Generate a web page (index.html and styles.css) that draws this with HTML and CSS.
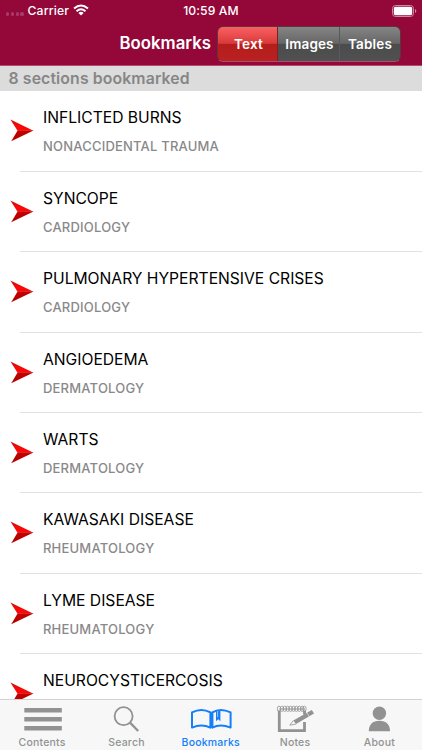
FILE: index.html
```
<!DOCTYPE html>
<html lang="en">
<head>
<meta charset="utf-8">
<title>Bookmarks</title>
<link rel="stylesheet" href="styles.css">
</head>
<body>
<svg class="defs" width="0" height="0" aria-hidden="true">
  <defs>
    <linearGradient id="upper" x1="0" y1="0" x2="0" y2="1"><stop offset="0" stop-color="#c80c0c"/><stop offset=".6" stop-color="#fa0808"/></linearGradient>
    <linearGradient id="lower" x1="0" y1="0" x2="0" y2="1"><stop offset="0" stop-color="#c40000"/><stop offset="1" stop-color="#b00000"/></linearGradient>
    <symbol id="arrow" viewBox="0 0 24 23">
      <path d="M.4.5 23.5 11.7H7.6Z" fill="url(#upper)"/>
      <path d="M7.6 11.5H23.5L1.2 22.3Z" fill="url(#lower)"/>
    </symbol>
  </defs>
</svg>
<div class="screen">
  <header class="header">
    <div class="status">
      <div class="carrier">
        <span class="dots"><i></i><i></i><i></i><i></i></span>
        <span class="carrier-name">Carrier</span>
        <svg class="wifi" width="16" height="12" viewBox="0 0 16 12" fill="none" stroke="#fff" stroke-width="2">
          <path d="M1 4.6Q8-1.6 15 4.6M3.5 7.3Q8 3.3 12.5 7.3"/><path d="M8 11.5 5.4 8.9Q8 6.7 10.6 8.9Z" fill="#fff" stroke="none"/>
        </svg>
      </div>
      <span class="time">10:59 AM</span>
      <svg class="battery" width="25" height="12" viewBox="0 0 25 12">
        <rect x=".5" y=".5" width="21" height="11" rx="3" fill="none" stroke="#cf86a2"/>
        <rect x="1.8" y="1.8" width="18.4" height="8.4" rx="1.6" fill="#fff"/>
        <path d="M23 4v4q1.3-.6 1.3-2T23 4Z" fill="#cf86a2"/>
      </svg>
    </div>
    <div class="nav">
      <h1 class="nav-title">Bookmarks</h1>
      <div class="segments">
        <span class="segment active">Text</span>
        <span class="segment">Images</span>
        <span class="segment last">Tables</span>
      </div>
    </div>
  </header>
  <div class="section-head">8 sections bookmarked</div>
  <main class="list">
    <div class="row"><svg class="arrow"><use href="#arrow"/></svg><div class="copy"><div class="title">INFLICTED BURNS</div><div class="sub">NONACCIDENTAL TRAUMA</div></div></div>
    <div class="row"><svg class="arrow"><use href="#arrow"/></svg><div class="copy"><div class="title">SYNCOPE</div><div class="sub">CARDIOLOGY</div></div></div>
    <div class="row"><svg class="arrow"><use href="#arrow"/></svg><div class="copy"><div class="title">PULMONARY HYPERTENSIVE CRISES</div><div class="sub">CARDIOLOGY</div></div></div>
    <div class="row"><svg class="arrow"><use href="#arrow"/></svg><div class="copy"><div class="title">ANGIOEDEMA</div><div class="sub">DERMATOLOGY</div></div></div>
    <div class="row"><svg class="arrow"><use href="#arrow"/></svg><div class="copy"><div class="title">WARTS</div><div class="sub">DERMATOLOGY</div></div></div>
    <div class="row"><svg class="arrow"><use href="#arrow"/></svg><div class="copy"><div class="title">KAWASAKI DISEASE</div><div class="sub">RHEUMATOLOGY</div></div></div>
    <div class="row"><svg class="arrow"><use href="#arrow"/></svg><div class="copy"><div class="title">LYME DISEASE</div><div class="sub">RHEUMATOLOGY</div></div></div>
    <div class="row"><svg class="arrow"><use href="#arrow"/></svg><div class="copy"><div class="title">NEUROCYSTICERCOSIS</div></div></div>
  </main>
  <nav class="tabs">
    <div class="tab">
      <svg width="40" height="28" viewBox="0 0 40 28" fill="#929292"><path d="M2.3 3h37.5v4.4H2.3zM2.3 12h37.5v4.4H2.3zM2.3 21h37.5v4.4H2.3z"/></svg>
      <span>Contents</span>
    </div>
    <div class="tab">
      <svg width="40" height="28" viewBox="0 0 40 28" fill="none" stroke="#929292"><circle cx="17.6" cy="11.2" r="9" stroke-width="1.8"/><path d="M24 17.6 32.2 26" stroke-width="2.3"/></svg>
      <span>Search</span>
    </div>
    <div class="tab current">
      <svg width="42" height="28" viewBox="0 0 42 28" fill="none" stroke="#147efb" stroke-width="2" stroke-linejoin="round"><path d="M20.4 7.4Q11.6 2.4 2 7.4V22.6Q11.6 18.2 20.4 22.6ZM22.4 7.4Q30.4 2.4 40.6 7.4V22.6Q30.4 18.2 22.4 22.6Z"/><path d="M26 5.8V16.2L28.2 14.2 30.4 16.2V5Z" fill="#147efb" stroke="none"/><path d="M27.6 6v6" stroke="#f7f7f7" stroke-width=".6"/></svg>
      <span>Bookmarks</span>
    </div>
    <div class="tab">
      <svg width="40" height="30" viewBox="0 0 40 30" fill="none" stroke="#929292"><path d="M4.3 6.5V26.6H29.5V18M29.5 6.5V10.5" stroke-width="2.8"/><path d="M4.3 5H30" stroke-width="1"/><g stroke-width=".8"><ellipse cx="4" cy="4.8" rx="1.7" ry="2.7"/><ellipse cx="6.9" cy="4.8" rx="1.7" ry="2.7"/><ellipse cx="9.8" cy="4.8" rx="1.7" ry="2.7"/><ellipse cx="12.7" cy="4.8" rx="1.7" ry="2.7"/><ellipse cx="15.6" cy="4.8" rx="1.7" ry="2.7"/><ellipse cx="18.5" cy="4.8" rx="1.7" ry="2.7"/><ellipse cx="21.4" cy="4.8" rx="1.7" ry="2.7"/><ellipse cx="24.3" cy="4.8" rx="1.7" ry="2.7"/><ellipse cx="27.2" cy="4.8" rx="1.7" ry="2.7"/><ellipse cx="29.4" cy="4.8" rx="1.7" ry="2.7"/></g><path d="M18.3 16.5 36.8 5.9 39 9.5 21 20Z" fill="#929292" stroke="none"/><path d="M18.3 16.5 14.8 21.2 21 20" stroke-width=".8"/><path d="m31.8 8.5 2.3 4" stroke="#f7f7f7" stroke-width=".6"/></svg>
      <span>Notes</span>
    </div>
    <div class="tab">
      <svg width="40" height="28" viewBox="0 0 40 28" fill="#929292"><circle cx="20.4" cy="8.3" r="6.7"/><path d="M9.8 26.2C9.8 19.5 13.6 15.8 20.4 15.8S31 19.5 31 26.2Z"/></svg>
      <span>About</span>
    </div>
  </nav>
</div>
</body>
</html>
```
FILE: styles.css
```
* { box-sizing: border-box; }
body { margin: 0; font-family: Inter, "Liberation Sans", sans-serif; background: #fff; }
.defs { position: absolute; }
.screen { width: 422px; height: 750px; display: flex; flex-direction: column; overflow: hidden; }

.header { flex: none; height: 66px; background: #930739; border-bottom: 1px solid #b5496e; color: #fff; }
.status { height: 21px; display: grid; grid-template-columns: 1fr auto 1fr; align-items: center; padding: 0 6px; font-size: 12.2px; font-weight: 500; }
.carrier { display: flex; align-items: center; }
.dots { display: flex; gap: 1.6px; padding-top: 7px; margin-right: 4px; }
.dots i { width: 3.2px; height: 3.2px; border-radius: 50%; background: #a8396a; }
.carrier-name { letter-spacing: .15px; margin-right: 4px; }
.wifi { margin-top: -1px; }
.time { letter-spacing: .1px; }
.battery { justify-self: end; margin-right: -1px; }
.nav { height: 45px; display: flex; align-items: center; justify-content: flex-end; padding-right: 21px; }
.nav-title { margin: 0 6px 0 0; font-size: 16.8px; line-height: 35px; font-weight: 560; letter-spacing: 0; }
.segments { display: grid; grid-template-columns: 60px 61px 61px; height: 36px; border: 1px solid #60343f; border-bottom-color: #a8506f; border-radius: 6px; overflow: hidden; }
.segment { display: flex; align-items: center; justify-content: center; padding-left: 2px; font-size: 13.5px; font-weight: 600; letter-spacing: .15px; background: linear-gradient(#858585, #666 48%, #4c4c4c 51%, #505050); }
.active { background: linear-gradient(#fb6161, #d83a3a 48%, #b51d1d 51%, #ba2222); border-right: 1px solid #7d2020; }
.last { padding-left: 0; border-left: 1px solid #595959; }

.section-head { flex: none; height: 25px; padding-left: 8.5px; background: #dcdcdc; color: #868686; font-size: 15.8px; font-weight: 570; letter-spacing: .12px; line-height: 25px; }
.list { flex: 1; min-height: 0; overflow: hidden; padding-top: .4px; }
.row { display: flex; height: 80.4px; padding-left: 10px; }
.arrow { flex: none; width: 24px; height: 23px; margin: 28px 9px 0 0; }
.copy { flex: 1; position: relative; padding-top: 16px; }
.copy::after { content: ""; position: absolute; left: -23px; right: 0; bottom: 0; height: 1px; background: #e1e1e1; }
.title { font-size: 15.65px; line-height: 22px; color: #000; white-space: nowrap; }
.sub { margin-top: 8px; font-size: 13px; line-height: 18px; font-weight: 500; letter-spacing: .2px; color: #898989; white-space: nowrap; }

.tabs { flex: none; height: 51px; display: grid; grid-template-columns: repeat(5, 84.3px); background: #f7f7f7; border-top: 1px solid #d2d2d2; }
.tab { display: flex; flex-direction: column; align-items: center; padding-top: 4px; color: #929292; font-size: 10.5px; font-weight: 500; }
.tab svg { height: 30px; }
.tab span { line-height: 13px; margin-top: 2px; letter-spacing: .2px; }
.current { color: #147efb; }
```
